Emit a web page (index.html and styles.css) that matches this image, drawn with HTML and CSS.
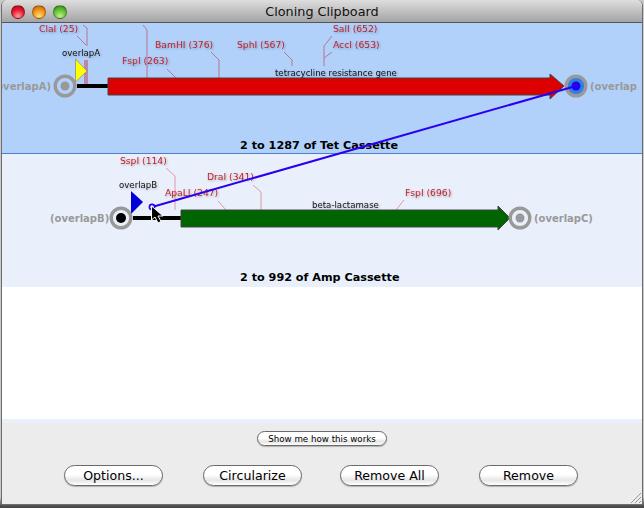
FILE: index.html
```html
<!DOCTYPE html>
<html lang="en">
<head>
<meta charset="utf-8">
<title>Cloning Clipboard</title>
<link rel="stylesheet" href="styles.css">
</head>
<body>
<div class="window">
  <header class="titlebar">
    <div class="lights">
      <span class="light red"></span>
      <span class="light amber"></span>
      <span class="light green"></span>
    </div>
    <div class="title">Cloning Clipboard</div>
  </header>
  <main class="list">
    <section class="row selected">
      <svg class="map" width="640" height="130" viewBox="2 23 640 130">
        <g class="leaders">
          <path d="M83 25 L87 28 V46 M77 36 L86 45"/>
          <path class="wide" d="M86 60 V84"/>
          <path d="M143 25 L147 30 V78"/>
          <path d="M167 69 L176 78"/>
          <path d="M211 52 L219 60 V78"/>
          <path d="M284 52 L292 60 V66"/>
          <path d="M332 36 L324 46 V66 M332 52 L324 58"/>
        </g>
        <text class="site" x="39" y="32">ClaI (25)</text>
        <text class="site" x="122" y="64">FspI (263)</text>
        <text class="site" x="155" y="48">BamHI (376)</text>
        <text class="site" x="237" y="48">SphI (567)</text>
        <text class="site" x="333" y="32">SalI (652)</text>
        <text class="site" x="333" y="48">AccI (653)</text>
        <text class="small" x="62" y="56">overlapA</text>
        <polygon class="tri-y" points="75.5,59 87,71 75.5,82"/>
        <rect class="linker" x="77" y="84" width="31" height="4"/>
        <polygon class="bar-red" points="108,78 550,78 550,74 564,86 550,99 550,95 108,95"/>
        <text class="small" x="275" y="76">tetracycline resistance gene</text>
        <circle class="ring" cx="65" cy="86" r="9.8"/>
        <circle class="dot-gray" cx="65" cy="86" r="4.5"/>
        <text class="end" x="51" y="90" text-anchor="end">overlapA)</text>
        <circle class="ring ring-hot" cx="576" cy="86" r="9.8"/>
        <circle class="dot-blue" cx="576" cy="86" r="4.5"/>
        <text class="end" x="590" y="90">(overlap</text>
        <text class="name" x="240" y="149">2 to 1287 of Tet Cassette</text>
      </svg>
    </section>
    <section class="row plain">
      <svg class="map" width="640" height="133" viewBox="2 154 640 133">
        <g class="leaders thin">
          <path d="M166 168 L175 176 V210"/>
          <path d="M218 201 L226 210"/>
          <path d="M253 185 L261 192 V210"/>
          <path d="M404 200 L396 210"/>
        </g>
        <text class="site" x="120" y="164">SspI (114)</text>
        <text class="site" x="165" y="196">ApaLI (247)</text>
        <text class="site" x="207" y="180">DraI (341)</text>
        <text class="site" x="405" y="196">FspI (696)</text>
        <text class="small" x="119" y="188">overlapB</text>
        <polygon class="tri-b" points="131,191 143,202 131,214"/>
        <rect class="linker" x="133" y="216" width="48" height="4"/>
        <polygon class="bar-green" points="181,210 498,210 498,206 510,218 498,230 498,227 181,227"/>
        <text class="small" x="312" y="208">beta-lactamase</text>
        <circle class="ring" cx="121" cy="218" r="9.8"/>
        <circle class="dot-black" cx="121" cy="218" r="5"/>
        <text class="end" x="50" y="222">(overlapB)</text>
        <circle class="ring" cx="520" cy="218" r="9.8"/>
        <circle class="dot-gray" cx="520" cy="218" r="4.5"/>
        <text class="end" x="534" y="222">(overlapC)</text>
        <text class="name" x="240" y="281">2 to 992 of Amp Cassette</text>
      </svg>
    </section>
    <div class="empty"></div>
    <div class="strip"></div>
    <svg class="drag" width="640" height="264" viewBox="2 23 640 264">
      <line class="drag-line" x1="152" y1="207" x2="576" y2="86"/>
      <circle class="drag-end" cx="152" cy="207" r="2.6"/>
      <path class="cursor" d="M151.5 206 V220 L155 217 L158 223 L161 221.5 L158 216 L163 216 Z"/>
    </svg>
  </main>
  <footer class="footer">
    <button class="btn btn-small" type="button">Show me how this works</button>
    <div class="actions">
      <button class="btn" type="button">Options...</button>
      <button class="btn" type="button">Circularize</button>
      <button class="btn tight" type="button">Remove All</button>
      <button class="btn" type="button">Remove</button>
    </div>
    <svg class="grip" width="12" height="12" viewBox="0 0 12 12">
      <path d="M11 1 L1 11 M11 5 L5 11 M11 9 L9 11"/>
    </svg>
  </footer>
</div>
</body>
</html>
```
FILE: styles.css
```css
* { box-sizing: border-box; }
html, body { margin: 0; padding: 0; }
body {
  width: 644px;
  height: 508px;
  overflow: hidden;
  background: linear-gradient(#c9c9c9 0, #c9c9c9 497px, #555 505px, #444 508px);
  font-family: "DejaVu Sans", "Liberation Sans", sans-serif;
}
.window {
  width: 642px;
  height: 505px;
  margin-left: 1px;
  display: flex;
  flex-direction: column;
  border: solid #6d6d6d;
  border-width: 0 1px 1px 1px;
  border-radius: 6px 6px 0 0;
  overflow: hidden;
  background: #ececec;
}
.titlebar {
  height: 23px;
  flex: none;
  position: relative;
  display: flex;
  align-items: center;
  justify-content: center;
  background: linear-gradient(#dedede, #a4a4a4);
  border-bottom: 1px solid #555;
}
.title {
  font-size: 12.8px;
  color: #111;
}
.lights {
  position: absolute;
  left: 9px;
  top: 5px;
  display: flex;
  gap: 7px;
}
.light {
  width: 14px;
  height: 14px;
  border-radius: 50%;
  border: 1px solid rgba(0, 0, 0, .3);
}
.red { background: radial-gradient(circle at 50% 85%, #ff9aa0, #e8182c 55%, #a80818); }
.amber { background: radial-gradient(circle at 50% 85%, #ffe070, #f09018 55%, #b86008); }
.green { background: radial-gradient(circle at 50% 85%, #c0f090, #60c030 55%, #308018); }

.list {
  position: relative;
  flex: 1;
  display: flex;
  flex-direction: column;
  background: #fff;
}
.row { flex: none; }
.map, .drag { display: block; }
.selected {
  height: 131px;
  background: #b1d1fb;
  border-bottom: 1px solid #4a80c8;
  border-left: 1px solid #4a80c8;
  border-right: 1px solid #4a80c8;
  margin-left: -1px;
  margin-right: -1px;
}
.plain {
  height: 133px;
  background: #e9f0fc;
}
.empty { flex: 1; }
.strip { height: 4px; flex: none; background: #e9f0fc; }
.drag {
  position: absolute;
  left: 0;
  top: 0;
  pointer-events: none;
}
.leaders path { fill: none; stroke: #b8758f; stroke-width: 1; }
.leaders .wide { stroke-width: 4; stroke: #b889a8; }
.thin path { stroke: #dc9aa4; }
.site {
  font-size: 9.2px;
  fill: #c81e26;
  filter: drop-shadow(1px 1px 1px rgba(0, 0, 0, .3));
}
.small {
  font-size: 8.6px;
  fill: #111;
  filter: drop-shadow(1px 1px 1px rgba(0, 0, 0, .25));
}
.end { font-size: 10px; font-weight: 700; fill: #999; }
.name { font-size: 11.2px; font-weight: 700; fill: #000; }
.ring { fill: none; stroke: #999; stroke-width: 3.4; }
.ring-hot { fill: #2f7fe8; }
.dot-gray { fill: #999; }
.dot-blue { fill: #2200ee; }
.dot-black { fill: #000; }
.tri-y { fill: #ffff00; stroke: #777; stroke-width: .6; }
.tri-b { fill: #0000d8; }
.linker { fill: #000; }
.bar-red { fill: #dc0000; stroke: #444; stroke-width: 1; }
.bar-green { fill: #006400; stroke: #444; stroke-width: 1; }
.drag-line { stroke: #2a00ee; stroke-width: 2; }
.drag-end { fill: #e9f0fc; stroke: #2a00ee; stroke-width: 1.6; }
.cursor { fill: #000; stroke: #fff; stroke-width: 1; }

.footer {
  position: relative;
  height: 81px;
  flex: none;
  display: flex;
  flex-direction: column;
  align-items: center;
  padding-top: 8px;
  background: #ececec;
}
.btn {
  width: 99px;
  height: 21px;
  padding: 0;
  border: 1px solid #6a6a6a;
  border-radius: 11px;
  background: linear-gradient(#fff 0, #fff 45%, #e6e6e6 75%, #fff 100%);
  box-shadow: 0 1px 1px rgba(0, 0, 0, .25);
  font-family: "DejaVu Sans", "Liberation Sans", sans-serif;
  font-size: 12.6px;
  color: #000;
}
.btn-small {
  width: 130px;
  height: 15px;
  font-size: 8.7px;
  border-radius: 8px;
  line-height: 12px;
}
.actions {
  display: flex;
  gap: 40px;
  width: 100%;
  padding-left: 62px;
  margin-top: 19px;
}
.tight { margin-left: -2px; }
.grip {
  position: absolute;
  right: 0;
  bottom: 0;
}
.grip path { fill: none; stroke: #9a9a9a; stroke-width: 1; }
```
